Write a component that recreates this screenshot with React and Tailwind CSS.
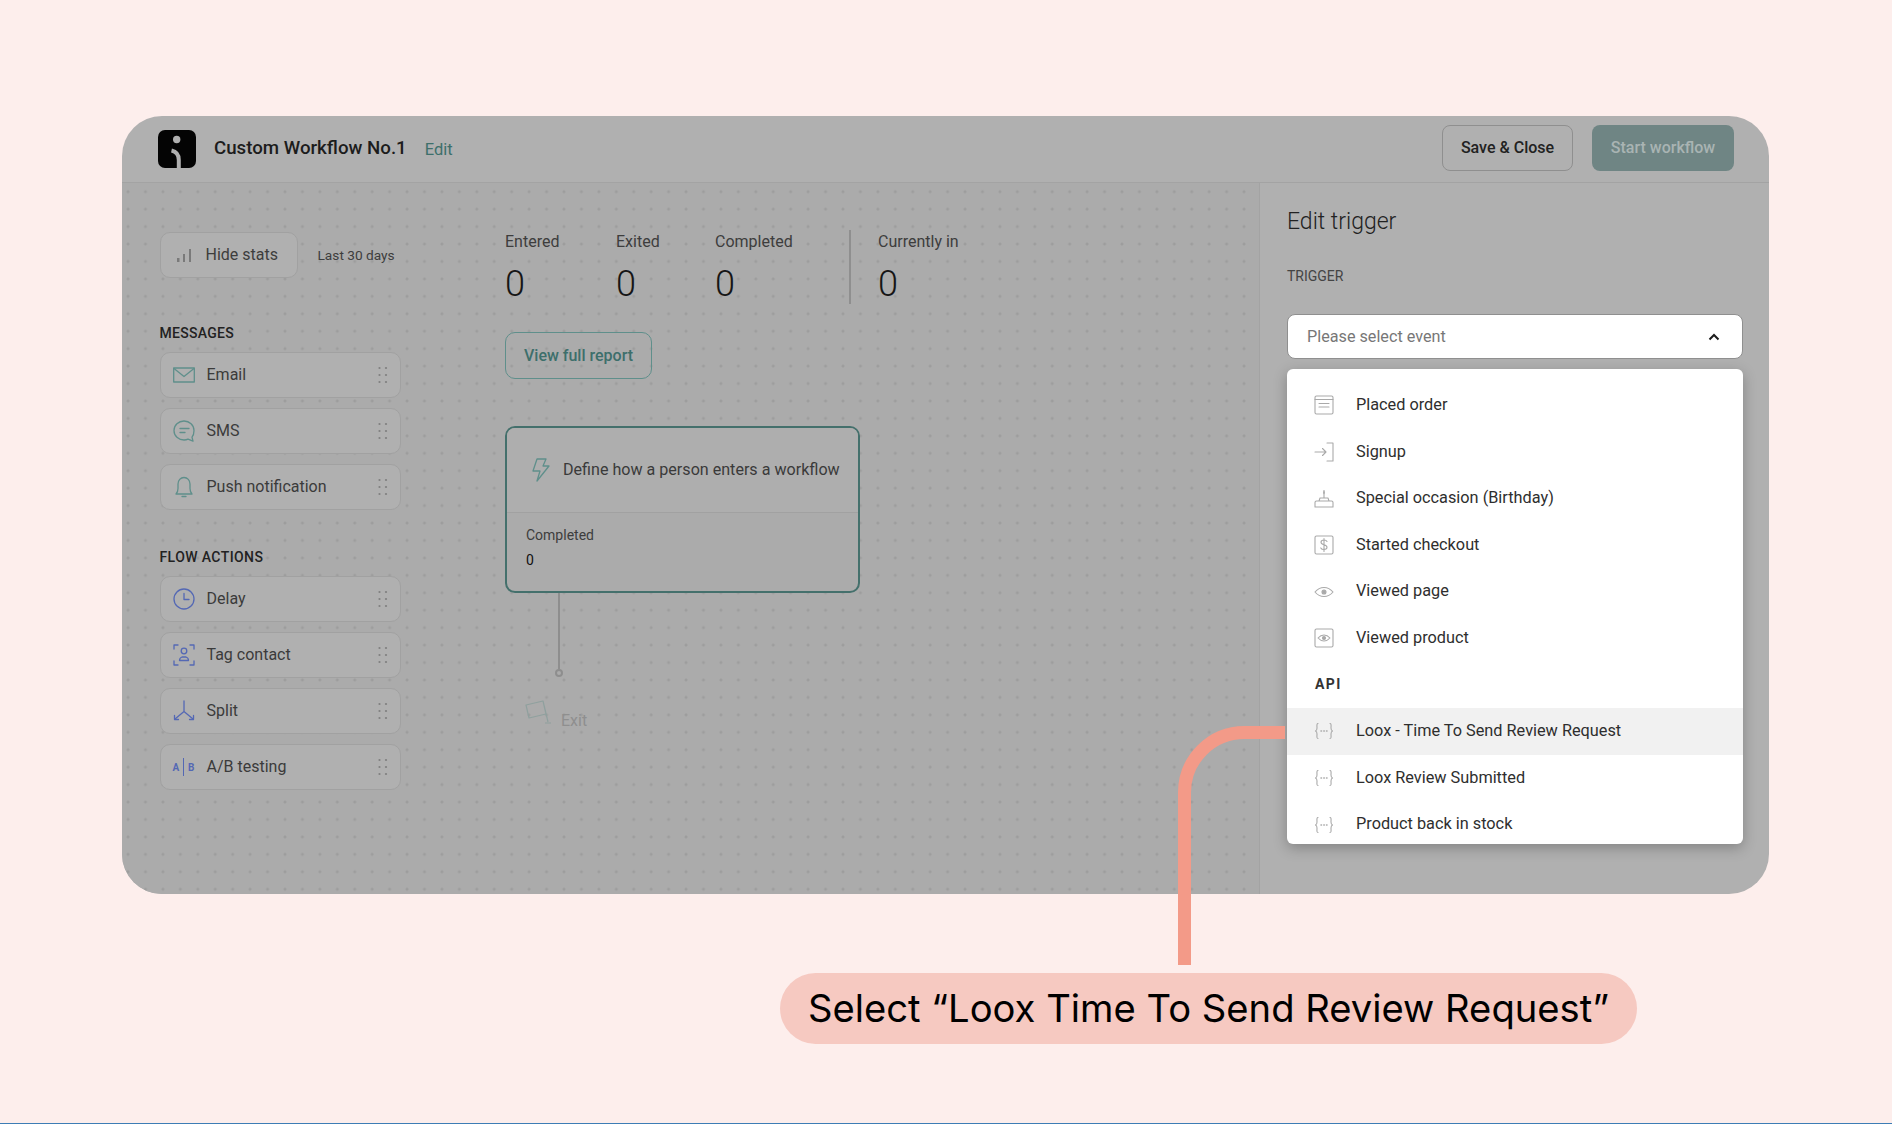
const drag = [0, 1, 2];

function Grip() {
  return (
    <svg viewBox="0 0 10 18" className="h-[18px] w-[10px]" fill="#7f7f7f">
      {drag.map((i) => (
        <g key={i}>
          <circle cx="1.5" cy={2 + i * 7} r="1.1" />
          <circle cx="8" cy={2 + i * 7} r="1.1" />
        </g>
      ))}
    </svg>
  );
}

function Logo() {
  return (
    <svg viewBox="0 0 38 38" className="h-[38px] w-[38px]">
      <rect width="38" height="38" rx="7" fill="#040404" />
      <circle cx="18.700" cy="9.500" r="3.700" fill="#b0b0b0" />
      <path d="M13.500 20.500C18 21.500 20.800 25 20.800 30V38" fill="none" stroke="#b0b0b0" strokeWidth="4" />
    </svg>
  );
}

const teal = { fill: "none", stroke: "#5f8f8b", strokeWidth: 1.3, strokeLinecap: "round", strokeLinejoin: "round" };
const blue = { fill: "none", stroke: "#5468b4", strokeWidth: 1.3, strokeLinecap: "round", strokeLinejoin: "round" };
const grey = { fill: "none", stroke: "#a9a9a9", strokeWidth: 1.1, strokeLinecap: "round", strokeLinejoin: "round" };

function EmailIcon() {
  return (
    <svg viewBox="0 0 22 22" className="h-[22px] w-[22px]" {...teal}>
      <rect x="0.7" y="4" width="20.6" height="14" />
      <path d="M1 4.500l10 8 10-8" />
    </svg>
  );
}

function SmsIcon() {
  return (
    <svg viewBox="0 0 22 22" className="h-[22px] w-[22px]" {...teal}>
      <path d="M11 1C5.500 1 1 5 1 10.500S5.500 20 11 20c1.500 0 3-.3 4-.8l5 2-1-4c1.500-1.800 2-4 2-6.700C21 5 16.500 1 11 1Z" />
      <path d="M7 8.500h9M7 12.500h5" />
    </svg>
  );
}

function BellIcon() {
  return (
    <svg viewBox="0 0 22 22" className="h-[22px] w-[22px]" {...teal}>
      <path d="M3 18c1.500-1.500 2-3 2-5.500V8c0-3.500 2.500-6.500 6-6.500s6 3 6 6.500v4.500c0 2.500.5 4 2 5.500Z" />
      <path d="M9 20.500h4" />
    </svg>
  );
}

function ClockIcon() {
  return (
    <svg viewBox="0 0 22 22" className="h-[22px] w-[22px]" {...blue}>
      <circle cx="11" cy="11" r="10" />
      <path d="M11 5.500V11.500H16" />
    </svg>
  );
}

function TagContactIcon() {
  return (
    <svg viewBox="0 0 22 22" className="h-[22px] w-[22px]" {...blue}>
      <path d="M1 5V1h4M17 1h4v4M1 17v4h4M17 21h4v-4" />
      <circle cx="11" cy="7" r="2.800" />
      <path d="M6.500 16.500c0-2 1-3 2.500-3.500h4c1.500.5 2.500 1.500 2.500 3.500Z" />
    </svg>
  );
}

function SplitIcon() {
  return (
    <svg viewBox="0 0 22 22" className="h-[22px] w-[22px]" {...blue}>
      <path d="M11 1v10.500L2 19M11 11.500l9 7.500" />
      <path d="M1.500 15.500v4h4M20.500 15.500v4h-4" />
    </svg>
  );
}

function AbIcon() {
  return (
    <div className="flex h-[22px] w-[22px] items-center justify-between text-[10px] font-bold text-[#5468b4]">
      <span>A</span>
      <span className="h-[18px] w-px bg-[#5468b4]" />
      <span>B</span>
    </div>
  );
}

function OrderIcon() {
  return (
    <svg viewBox="0 0 20 20" className="h-5 w-5" {...grey}>
      <rect x="1" y="1" width="18" height="18" rx="1.500" />
      <path d="M1 4.500h18M5 8.500h10M5 12h10" />
    </svg>
  );
}

function SignupIcon() {
  return (
    <svg viewBox="0 0 20 20" className="h-5 w-5" {...grey}>
      <path d="M13 1h6v18h-6M1 10h11M8.500 6.500l3.500 3.500-3.500 3.500" />
    </svg>
  );
}

function CakeIcon() {
  return (
    <svg viewBox="0 0 20 20" className="h-5 w-5" {...grey}>
      <path d="M1 19v-4.500c0-1 .5-1.500 1.500-1.500h15c1 0 1.500.5 1.500 1.500V19ZM5 13l1-3h8l1 3M10 10V6.500M10 6.500c-1-1-.5-2 0-4 .5 2 1 3 0 4Z" />
    </svg>
  );
}

function DollarIcon() {
  return (
    <svg viewBox="0 0 20 20" className="h-5 w-5" {...grey}>
      <rect x="1" y="1" width="18" height="18" rx="1.500" />
      <path d="M13 6.500c-.5-1-1.500-1.500-3-1.500-1.800 0-3 .8-3 2.300 0 3.200 6 1.700 6 5 0 1.500-1.300 2.200-3 2.200-1.500 0-2.700-.6-3.200-1.600M10 3.500v13" />
    </svg>
  );
}

function EyeIcon() {
  return (
    <svg viewBox="0 0 20 20" className="h-5 w-5" {...grey}>
      <path d="M1 10c2.500-3 5.500-4.500 9-4.500S16.500 7 19 10c-2.500 3-5.500 4.500-9 4.500S3.500 13 1 10Z" />
      <circle cx="10" cy="10" r="2" fill="#a9a9a9" />
    </svg>
  );
}

function EyeBoxIcon() {
  return (
    <svg viewBox="0 0 20 20" className="h-5 w-5" {...grey}>
      <rect x="1" y="1" width="18" height="18" rx="1.500" />
      <path d="M4 10c1.800-2 3.800-3 6-3s4.200 1 6 3c-1.800 2-3.800 3-6 3s-4.200-1-6-3Z" />
      <circle cx="10" cy="10" r="1.500" fill="#a9a9a9" />
    </svg>
  );
}

function ApiIcon() {
  return (
    <svg viewBox="0 0 20 20" className="h-5 w-5" {...grey}>
      <path d="M4 2.500C2.500 2.500 3 5 3 7s0 2.500-1.500 3C3 10.500 3 11 3 13s-.5 4.500 1 4.500M16 2.500c1.500 0 1 2.500 1 4.500s0 2.500 1.500 3c-1.500.5-1.500 1-1.500 3s.5 4.500-1 4.500" />
      <path d="M7 10h.5M9.800 10h.5M12.500 10h.5" strokeWidth="1.500" />
    </svg>
  );
}

function SidebarItem({ icon, label }) {
  return (
    <div className="flex h-[46px] items-center rounded-[10px] border border-[#a1a1a1] bg-[#b0b0b0] pl-[12px] pr-[12px]">
      {icon}
      <span className="ml-[12px] flex-1 text-[16px] text-[#3b3b3b]">{label}</span>
      <Grip />
    </div>
  );
}

function Stat({ label, className }) {
  return (
    <div className={className}>
      <div className="text-[16px] leading-[20px] text-[#3d3d3d]">{label}</div>
      <div className="mt-[11px] text-[36px] font-light leading-[42px] text-[#161616]">0</div>
    </div>
  );
}

function EventItem({ icon, label, active }) {
  return (
    <div className={`flex h-[46.600px] items-center pl-[27px] ${active ? "bg-[#f1f1f1]" : ""}`}>
      {icon}
      <span className="ml-[22px] text-[16.300px] text-[#2e2e2e]">{label}</span>
    </div>
  );
}

export default function App() {
  return (
    <div
      className="relative h-[1124px] overflow-hidden border-b border-[#3d7db5] bg-[#fdeeec] pt-[116px] pl-[122px]"
      style={{ fontFamily: "Roboto, sans-serif" }}
    >
      <div className="flex h-[778px] w-[1647px] flex-col overflow-hidden rounded-[40px] bg-[#b0b0b0]">
        <header className="flex h-[67px] shrink-0 items-center border-b border-[#a3a3a3] pl-[36px] pr-[35px]">
          <Logo />
          <span className="ml-[18px] -mt-[2px] text-[18.700px] font-medium text-[#1c1c1c]">Custom Workflow No.1</span>
          <span className="ml-[18px] mt-[2px] text-[16.500px] text-[#3d6f6b]">Edit</span>
          <button className="ml-auto -mt-[3px] h-[46px] w-[131px] rounded-[8px] border border-[#8f8f8f] text-[16px] font-medium text-[#222222]">
            Save &amp; Close
          </button>
          <button className="ml-[19px] -mt-[3px] h-[46px] w-[142px] rounded-[8px] bg-[#6f8584] text-[16px] font-medium text-[#a9b4b3]">
            Start workflow
          </button>
        </header>

        <div className="flex min-h-0 flex-1">
          <div className="flex flex-1 bg-[#ababab] bg-[radial-gradient(circle,#9d9d9d_1.300px,transparent_1.700px)] bg-[size:17.450px_17.450px] bg-[position:-2.700px_0px] pl-[37.500px] pt-[49px]">
            <aside className="w-[241px]">
              <div className="flex items-center">
                <div className="flex h-[46px] w-[138px] items-center rounded-[10px] border border-[#a1a1a1] bg-[#b0b0b0] pl-[16px]">
                  <svg viewBox="0 0 14 13" className="h-[13px] w-[14px]" fill="#7a7a7a">
                    <rect x="0" y="9" width="2.500" height="4" />
                    <rect x="6" y="5" width="2" height="8" />
                    <rect x="12" y="0" width="2" height="13" />
                  </svg>
                  <span className="ml-[15px] text-[16px] text-[#3d3d3d]">Hide stats</span>
                </div>
                <span className="ml-[20px] text-[13.700px] text-[#3d3d3d]">Last 30 days</span>
              </div>

              <div className="mt-[47px] text-[14px] font-medium leading-[16px] tracking-[0.3px] text-[#222222]">MESSAGES</div>
              <div className="mt-[11px] flex flex-col gap-[10px]">
                <SidebarItem icon={<EmailIcon />} label="Email" />
                <SidebarItem icon={<SmsIcon />} label="SMS" />
                <SidebarItem icon={<BellIcon />} label="Push notification" />
              </div>

              <div className="mt-[39px] text-[14px] font-medium leading-[16px] tracking-[0.4px] text-[#222222]">FLOW ACTIONS</div>
              <div className="mt-[11px] flex flex-col gap-[10px]">
                <SidebarItem icon={<ClockIcon />} label="Delay" />
                <SidebarItem icon={<TagContactIcon />} label="Tag contact" />
                <SidebarItem icon={<SplitIcon />} label="Split" />
                <SidebarItem icon={<AbIcon />} label="A/B testing" />
              </div>
            </aside>

            <main className="ml-[104.500px]">
              <div className="flex h-[72px]">
                <Stat label="Entered" className="w-[111px]" />
                <Stat label="Exited" className="w-[99px]" />
                <Stat label="Completed" className="w-[134px]" />
                <div className="-mt-[2px] h-[74px] w-[2px] bg-[#8f8f8f]" />
                <Stat label="Currently in" className="ml-[27px]" />
              </div>

              <button className="mt-[28px] h-[47px] w-[147px] rounded-[10px] border border-[#5f8f8b] text-[16px] font-medium text-[#3d6f6b]">
                View full report
              </button>

              <div className="mt-[47px] h-[167px] w-[355px] rounded-[10px] border-2 border-[#44706c] bg-[#ababab]">
                <div className="flex h-[85px] items-center rounded-t-[8px] border-b border-[#a1a1a1] bg-[#aeaeae] pl-[24px]">
                  <svg viewBox="0 0 20 24" className="h-[24px] w-[20px]" fill="none" stroke="#5f8f8b" strokeWidth="1.300" strokeLinejoin="round">
                    <path d="M6 1h9l-3 7h6L6 23l3-10H2Z" />
                  </svg>
                  <span className="ml-[12px] text-[16.100px] text-[#3a3a3a]">Define how a person enters a workflow</span>
                </div>
                <div className="pl-[19px] pt-[13px]">
                  <div className="text-[14px] leading-[18px] text-[#3d3d3d]">Completed</div>
                  <div className="mt-[7px] text-[14px] leading-[18px] text-[#111111]">0</div>
                </div>
              </div>

              <div className="ml-[53px] h-[76px] w-[2px] bg-[#8e8e8e]" />
              <div className="ml-[50px] h-[8px] w-[8px] rounded-full border-2 border-[#8e8e8e]" />
              <div className="ml-[20px] mt-[23px] flex">
                <svg viewBox="0 0 28 24" className="h-[24px] w-[28px]" fill="none" stroke="#8fa09e" strokeWidth="1.200" strokeLinejoin="round">
                  <path d="M1 5L18 1l3 13L4 18ZM18 1l5 21M20 23h6" />
                </svg>
                <span className="ml-[8px] mt-[11px] text-[16px] leading-[20px] text-[#8f8f8f]">Exit</span>
              </div>
            </main>
          </div>

          <aside className="w-[510px] shrink-0 border-l border-[#a3a3a3] pl-[27px] pr-[25px]">
            <h2 className="mt-[23px] text-[23px] font-light leading-[32px] text-[#222222]">Edit trigger</h2>
            <div className="mt-[29px] text-[14px] leading-[18px] text-[#444444]">TRIGGER</div>
            <div className="mt-[29px] flex h-[45px] w-[456px] items-center justify-between rounded-[8px] border border-[#8f8f8f] bg-white pl-[19px] pr-[22px]">
              <span className="mt-[1px] text-[16.200px] text-[#777777]">Please select event</span>
              <svg viewBox="0 0 12 8" className="h-2 w-3" fill="none" stroke="#1c1c1c" strokeWidth="2">
                <path d="M1.500 6.500L6 2l4.500 4.500" />
              </svg>
            </div>
            <div className="mt-[10px] h-[475px] w-[456px] overflow-hidden rounded-[6px] bg-white pt-[13px] shadow-[0_4px_14px_rgba(0,0,0,0.25)]">
              <EventItem icon={<OrderIcon />} label="Placed order" />
              <EventItem icon={<SignupIcon />} label="Signup" />
              <EventItem icon={<CakeIcon />} label="Special occasion (Birthday)" />
              <EventItem icon={<DollarIcon />} label="Started checkout" />
              <EventItem icon={<EyeIcon />} label="Viewed page" />
              <EventItem icon={<EyeBoxIcon />} label="Viewed product" />
              <div className="flex h-[46.600px] items-center pl-[28px] text-[14px] font-bold tracking-[1.400px] text-[#333333]">API</div>
              <EventItem icon={<ApiIcon />} label="Loox - Time To Send Review Request" active />
              <EventItem icon={<ApiIcon />} label="Loox Review Submitted" />
              <EventItem icon={<ApiIcon />} label="Product back in stock" />
            </div>
          </aside>
        </div>
      </div>

      <div className="ml-[658px] mt-[79px] flex h-[71px] w-[857px] items-center justify-center rounded-full bg-[#f6c9c1]">
        <span className="text-[38.200px] text-black" style={{ fontFamily: "Inter, sans-serif" }}>Select “Loox Time To Send Review Request”</span>
      </div>

      {/* callout line from the list row down to the caption */}
      <svg className="absolute left-[1178px] top-[726px]" width="108" height="240" fill="none" stroke="#f39a88" strokeWidth="13">
        <path d="M6.500 239V66.500A60 60 0 0 1 66.500 6.500H107" />
      </svg>
    </div>
  );
}
